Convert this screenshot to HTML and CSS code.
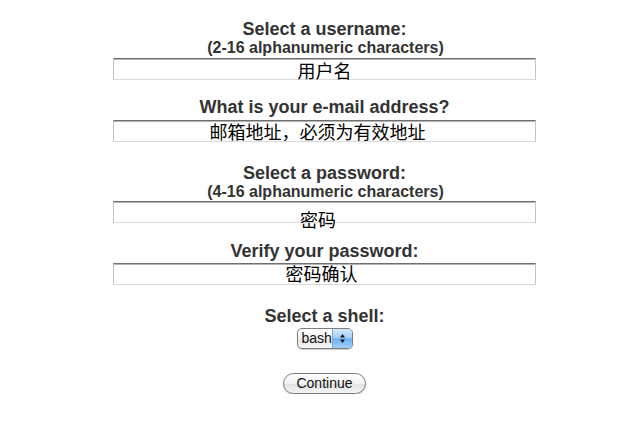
FILE: index.html
```html
<!DOCTYPE html>
<html>
<head>
<meta charset="utf-8">
<link rel="stylesheet" href="styles.css">
</head>
<body>
<form class="signup">
  <div class="label first">Select a username:</div>
  <div class="hint">(2-16 alphanumeric characters)</div>
  <div class="box b-user"><span class="val">用户名</span></div>

  <div class="label l-mail">What is your e-mail address?</div>
  <div class="box b-mail"><span class="val v-mail">邮箱地址，必须为有效地址</span></div>

  <div class="label l-pass">Select a password:</div>
  <div class="hint">(4-16 alphanumeric characters)</div>
  <div class="box b-pass"><span class="val v-pass">密码</span></div>

  <div class="label l-verify">Verify your password:</div>
  <div class="box b-verify"><span class="val v-verify">密码确认</span></div>

  <div class="label l-shell">Select a shell:</div>
  <div class="select-row">
    <div class="select">
      <span class="select-text">bash</span>
      <span class="stepper">
        <svg width="7" height="13" viewBox="0 0 7 13"><path d="M3.5 2 L6 5.5 L1 5.5 Z" fill="#111"/><path d="M3.5 11 L6 7.5 L1 7.5 Z" fill="#111"/></svg>
      </span>
    </div>
  </div>
  <div class="button-row">
    <div class="button">Continue</div>
  </div>
</form>
</body>
</html>
```

FILE: styles.css
```css
html, body {
  margin: 0;
  padding: 0;
  background: #fff;
}

.signup {
  display: flex;
  flex-direction: column;
  width: 423px;
  margin-left: 113px;
  padding-top: 19px;
  font-family: "Liberation Sans", Arial, sans-serif;
  color: #333;
  text-align: center;
}

.label {
  font-size: 18px;
  font-weight: bold;
  line-height: 20px;
}

.l-mail { margin-top: 17px; }
.l-pass { margin-top: 21px; }
.l-verify { margin-top: 18px; }
.l-shell { margin-top: 21px; }

.hint {
  font-size: 16px;
  font-weight: bold;
  line-height: 17px;
  padding-left: 2px;
}

.box {
  box-sizing: border-box;
  height: 22px;
  border-top: 1px solid #6f6f6f;
  border-left: 1px solid #c4c4c4;
  border-right: 1px solid #c4c4c4;
  border-bottom: 1px solid #dadada;
  box-shadow: inset 0 1px 0 #b4b4b4;
  display: flex;
  justify-content: center;
  align-items: flex-start;
}

.b-user { margin-top: 2px; }
.b-mail { margin-top: 3px; }
.b-pass { margin-top: 1px; }
.b-verify { margin-top: 2px; }

.val {
  font-family: "Noto Sans CJK SC", "Liberation Sans", sans-serif;
  font-size: 18px;
  line-height: 22px;
  color: #000;
  white-space: nowrap;
}

.v-mail { margin-top: -1px; padding-right: 14px; }
.v-pass { margin-top: 6px; padding-right: 13px; }
.v-verify { margin-top: -2px; padding-right: 6px; }

.select-row {
  display: flex;
  justify-content: center;
  margin-top: 2px;
}

.select {
  box-sizing: border-box;
  width: 56px;
  height: 21px;
  display: flex;
  align-items: stretch;
  border: 1px solid #7d7d7d;
  border-radius: 5px;
  background: linear-gradient(#ffffff, #f2f2f2 50%, #e4e4e4 51%, #f7f7f7);
  box-shadow: 0 1px 1px rgba(0,0,0,0.2);
  overflow: hidden;
  padding-left: 4px;
}

.select-text {
  flex: 1;
  text-align: left;
  font-family: "Liberation Sans", Arial, sans-serif;
  font-size: 14px;
  line-height: 19px;
  color: #111;
}

.stepper {
  width: 19px;
  display: flex;
  align-items: center;
  justify-content: center;
  background: linear-gradient(#d4e9fc, #a3cff7 45%, #6fb3f1 52%, #9fd0fa);
  border-left: 1px solid #7ea7cf;
}

.stepper svg { display: block; }

.button-row {
  display: flex;
  justify-content: center;
  margin-top: 24px;
}

.button {
  box-sizing: border-box;
  width: 83px;
  height: 21px;
  border: 1px solid #7a7a7a;
  border-radius: 11px;
  background: linear-gradient(#ffffff, #f1f1f1 50%, #e2e2e2 51%, #f4f4f4);
  box-shadow: 0 1px 1px rgba(0,0,0,0.2);
  font-family: "Liberation Sans", Arial, sans-serif;
  font-size: 14px;
  line-height: 19px;
  color: #111;
  text-align: center;
}
```
